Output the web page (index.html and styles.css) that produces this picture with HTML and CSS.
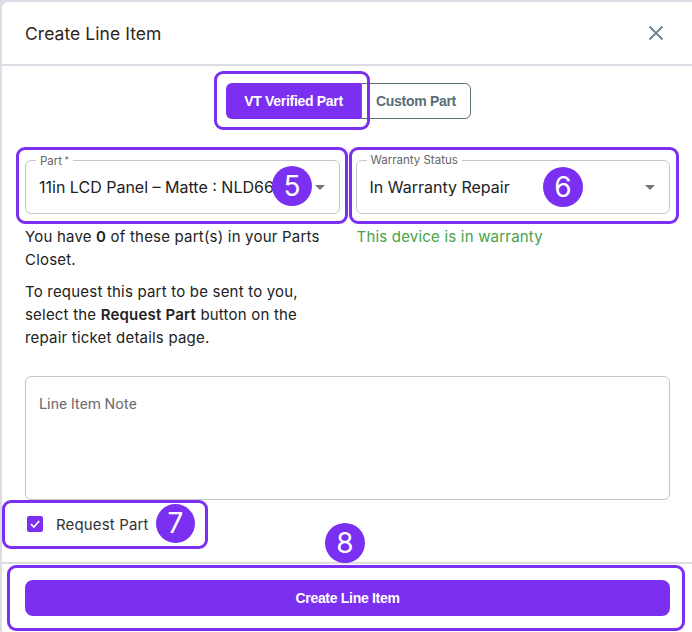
FILE: index.html
```html
<!DOCTYPE html>
<html lang="en">
<head>
<meta charset="utf-8">
<title>Create Line Item</title>
<link rel="stylesheet" href="styles.css">
</head>
<body>
<div class="modal">
  <header class="header">
    <h1 class="title">Create Line Item</h1>
    <button class="close" aria-label="Close">
      <svg width="16" height="16" viewBox="0 0 16 16"><path d="M1.5 1.5 L14.5 14.5 M14.5 1.5 L1.5 14.5" stroke="#6d838f" stroke-width="1.8" fill="none"/></svg>
    </button>
  </header>
  <main class="content">
    <div class="toggle">
      <button class="tog tog-on">VT Verified Part</button>
      <button class="tog tog-off">Custom Part</button>
    </div>
    <div class="fields">
      <div class="col">
        <div class="field">
          <span class="field-label">Part<span class="ast"> *</span></span>
          <span class="field-value">11in LCD Panel – Matte : NLD66</span>
          <span class="caret"></span>
        </div>
        <p class="help">You have <b>0</b> of these part(s) in your Parts Closet.</p>
        <p class="help help2">To request this part to be sent to you, select the <b>Request Part</b> button on the repair ticket details page.</p>
      </div>
      <div class="col">
        <div class="field">
          <span class="field-label">Warranty Status</span>
          <span class="field-value">In Warranty Repair</span>
          <span class="caret"></span>
        </div>
        <p class="ok">This device is in warranty</p>
      </div>
    </div>
    <textarea class="note" placeholder="Line Item Note"></textarea>
    <label class="check">
      <span class="box"><svg width="12" height="12" viewBox="0 0 12 12"><path d="M2 6.2 L4.9 9 L10.2 3" stroke="#fff" stroke-width="1.7" fill="none"/></svg></span>
      <span class="check-text">Request Part</span>
    </label>
  </main>
  <footer class="footer">
    <button class="primary">Create Line Item</button>
  </footer>
</div>

<div class="annotations">
  <div class="hl hl-toggle"></div>
  <div class="hl hl-part"></div>
  <div class="hl hl-warranty"></div>
  <div class="hl hl-check"></div>
  <div class="hl hl-footer"></div>
  <div class="badge b5">5</div>
  <div class="badge b6">6</div>
  <div class="badge b7">7</div>
  <div class="badge b8">8</div>
</div>
</body>
</html>
```
FILE: styles.css
```css
* { box-sizing: border-box; }
html, body { margin: 0; padding: 0; }
body {
  background: #dcdce4;
  width: 692px;
  height: 632px;
  overflow: hidden;
  font-family: Inter, "Noto Sans", sans-serif;
  color: #222;
}
.modal {
  margin: 2px 0 0 2px;
  width: 690px;
  height: 630px;
  background: #fff;
  border-top-left-radius: 6px;
  display: flex;
  flex-direction: column;
}
.header {
  height: 64px;
  padding: 0 28px 0 23px;
  display: flex;
  align-items: center;
  justify-content: space-between;
  border-bottom: 2px solid #dcdce4;
}
.title {
  margin: 0;
  font-size: 17.5px;
  font-weight: 400;
  color: #302616;
  letter-spacing: 0.05px;
}
.close {
  border: 0;
  background: none;
  padding: 0;
  width: 16px;
  height: 16px;
  display: flex;
}
.content {
  flex: 1;
  padding: 17px 22px 0 23px;
  display: flex;
  flex-direction: column;
}
.toggle {
  display: flex;
  justify-content: center;
  padding-left: 2px;
}
.tog {
  height: 36px;
  font-family: "Liberation Sans", Arial, sans-serif;
  font-weight: 700;
  font-size: 14px;
  letter-spacing: -0.3px;
  margin: 0;
}
.tog-on {
  width: 135px;
  background: #7b2ff0;
  color: #fff;
  border: 0;
  border-radius: 6px 0 0 6px;
}
.tog-off {
  width: 110px;
  background: #fff;
  color: #5a6d78;
  border: 1px solid #5f717b;
  border-radius: 0 6px 6px 0;
}
.fields {
  margin-top: 41px;
  display: flex;
  gap: 16px;
}
.col { flex: 1; min-width: 0; }
.field {
  position: relative;
  height: 54px;
  border: 1px solid #c6c6c6;
  border-radius: 6px;
  display: flex;
  align-items: center;
  padding: 0 13px;
}
.field-label {
  position: absolute;
  top: -8px;
  left: 10px;
  padding: 0 4px;
  background: #fff;
  font-size: 11.5px;
  line-height: 14px;
  color: #666;
}
.ast { font-size: 9px; vertical-align: 2px; }
.field-value {
  flex: 1;
  min-width: 0;
  font-size: 16px;
  color: #222;
  white-space: nowrap;
  overflow: hidden;
  margin-right: 12px;
}
.caret {
  width: 0;
  height: 0;
  border-left: 5px solid transparent;
  border-right: 5px solid transparent;
  border-top: 5px solid #757575;
  margin-right: 1px;
}
.help {
  margin: 11px 0 0;
  font-size: 15px;
  line-height: 23px;
  color: #222;
  letter-spacing: 0.2px;
  padding-right: 10px;
}
.help b { font-weight: 600; }
.help2 { margin-top: 9px; }
.ok {
  margin: 11px 0 0 1px;
  font-size: 15px;
  line-height: 23px;
  letter-spacing: 0.2px;
  color: #45a349;
}
.note {
  margin-top: 27px;
  height: 124px;
  width: 100%;
  resize: none;
  border: 1px solid #c6c6c6;
  border-radius: 6px;
  padding: 16px 13px;
  font-family: Roboto, "Liberation Sans", sans-serif;
  font-size: 15px;
  line-height: 22px;
  outline: none;
}
.note::placeholder { color: #6f6f6f; }
.check {
  margin-top: 15px;
  height: 18px;
  display: flex;
  align-items: center;
  padding-left: 2px;
}
.box {
  width: 16px;
  height: 16px;
  border-radius: 2px;
  background: #7b2ff0;
  display: flex;
  align-items: center;
  justify-content: center;
}
.check-text {
  margin-left: 13px;
  font-size: 15px;
  letter-spacing: 0.15px;
  color: #333;
}
.footer {
  height: 70px;
  border-top: 2px solid #dcdce4;
  padding: 16px 22px 0 23px;
}
.primary {
  width: 100%;
  height: 36px;
  border: 0;
  border-radius: 8px;
  background: #7b2ff0;
  color: #fff;
  font-family: "Liberation Sans", Arial, sans-serif;
  font-weight: 700;
  font-size: 14px;
  letter-spacing: -0.3px;
}
.annotations {
  position: absolute;
  left: 0;
  top: 0;
  width: 692px;
  height: 632px;
  pointer-events: none;
}
.hl {
  position: absolute;
  border: 3px solid #7b2ff0;
  border-radius: 9px;
}
.hl-toggle { left: 214px; top: 71px; width: 156px; height: 59px; }
.hl-part { left: 16px; top: 147px; width: 332px; height: 77px; }
.hl-warranty { left: 349px; top: 147px; width: 330px; height: 77px; }
.hl-check { left: 2px; top: 500px; width: 206px; height: 49px; }
.hl-footer { left: 7px; top: 565px; width: 678px; height: 66px; }
.badge {
  position: absolute;
  width: 40px;
  height: 40px;
  border-radius: 50%;
  background: #7b2ff0;
  color: #fff;
  font-family: Inter, "Noto Sans", sans-serif;
  font-size: 28px;
  line-height: 40px;
  text-align: center;
}
.b5 { left: 272px; top: 166px; }
.b6 { left: 543px; top: 167px; }
.b7 { left: 156px; top: 504px; width: 39px; height: 39px; line-height: 39px; }
.b8 { left: 325px; top: 523px; }
```
